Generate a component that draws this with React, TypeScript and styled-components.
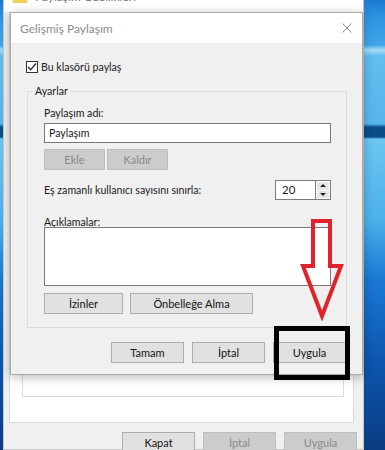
import React from 'react';
import styled, { createGlobalStyle } from 'styled-components';

const GlobalStyle = createGlobalStyle`
  html, body {
    margin: 0;
    padding: 0;
  }
  body {
    width: 385px;
    height: 450px;
    overflow: hidden;
    font-family: Lato, "Noto Sans", sans-serif;
  }
`;

const Desktop = styled.div`
  position: relative;
  width: 385px;
  height: 450px;
  overflow: hidden;
  background: linear-gradient(
    180deg,
    #1a7ad2 0px,
    #2f95e3 18px,
    #3fa6ea 45px,
    #a6ddf7 50px,
    #63bdef 56px,
    #56b5ec 124px,
    #0b4c8a 127px,
    #0b4c8a 137px,
    #6cc6f3 139px,
    #4cb0ea 220px,
    #1a78d4 280px,
    #0c56b0 360px,
    #0a3c80 450px
  );
`;

/* window behind */
const BackWindow = styled.div`
  position: absolute;
  left: 3px;
  top: -20px;
  width: 361px;
  height: 470px;
  box-sizing: border-box;
  border: 1px solid #c8c8c8;
  background: #f0f0f0;
  display: flex;
  flex-direction: column;
`;

const BackTitle = styled.div`
  height: 31px;
  flex-shrink: 0;
  background: #ffffff;
  display: flex;
  align-items: center;
  gap: 8px;
  padding-left: 9px;
  font-size: 12px;
  color: #777777;
`;

const BackBody = styled.div`
  flex: 1;
  display: flex;
  flex-direction: column;
  padding: 0 6px 0 5px;
`;

const TabPage = styled.div`
  height: 411px;
  box-sizing: border-box;
  margin-right: 3px;
  background: #ffffff;
  border: 1px solid #d9d9d9;
  display: flex;
  flex-direction: column;
  justify-content: flex-end;
  padding: 0 9px 25px 12px;
`;

const InnerBox = styled.div`
  height: 100px;
  border: 1px solid #dcdcdc;
`;

const ButtonRow = styled.div<{ $top: number; $right?: number }>`
  display: flex;
  justify-content: flex-end;
  gap: 8px;
  margin-top: ${p => p.$top}px;
  padding-right: ${p => p.$right ?? 0}px;
`;

const Button = styled.button<{ $w: number }>`
  width: ${p => p.$w}px;
  height: 21px;
  padding: 0;
  box-sizing: border-box;
  background: #e1e1e1;
  border: 1px solid #adadad;
  font-family: Lato, "Noto Sans", sans-serif;
  font-size: 11px;
  color: #111111;

  &:disabled {
    background: #cccccc;
    border-color: #bfbfbf;
    color: #8a8a8a;
  }
`;

/* front dialog */
const Dialog = styled.div`
  position: absolute;
  left: 10px;
  top: 12px;
  width: 353px;
  height: 363px;
  box-sizing: border-box;
  border: 1px solid #aaaaaa;
  background: #f0f0f0;
  box-shadow: 0 2px 10px rgba(0, 0, 0, 0.28);
  display: flex;
  flex-direction: column;
`;

const TitleBar = styled.div`
  height: 30px;
  flex-shrink: 0;
  background: #ffffff;
  display: flex;
  align-items: center;
  justify-content: space-between;
  padding: 0 10px 0 9px;
  font-size: 12px;
  color: #8c8c8c;
`;

const DialogBody = styled.div`
  flex: 1;
  display: flex;
  flex-direction: column;
  padding: 18px 15px 0 15px;
  font-size: 10.6px;
  color: #1a1a1a;
`;

const CheckRow = styled.label`
  display: flex;
  align-items: center;
  gap: 3px;
  height: 12px;
  line-height: 14px;
`;

const CheckBox = styled.span`
  width: 12px;
  height: 12px;
  box-sizing: border-box;
  border: 1px solid #333333;
  background: #ffffff;
  display: flex;
  align-items: center;
  justify-content: center;
`;

const GroupBox = styled.div`
  margin: 18px 0 0 1px;
  border: 1px solid #dcdcdc;
  padding: 0 15px 13px 16px;
  display: flex;
  flex-direction: column;
`;

const Legend = styled.span`
  align-self: flex-start;
  margin: -8px 0 0 -11px;
  padding: 0 2px;
  line-height: 14px;
  background: #f0f0f0;
`;

const Label = styled.div<{ $top: number }>`
  margin-top: ${p => p.$top}px;
  line-height: 14px;
`;

const TextField = styled.div<{ $h: number; $top: number }>`
  height: ${p => p.$h}px;
  margin-top: ${p => p.$top}px;
  box-sizing: border-box;
  border: 1px solid #7a7a7a;
  background: #ffffff;
  padding-left: 4px;
  line-height: 18px;
`;

const LimitRow = styled.div`
  display: flex;
  align-items: center;
  justify-content: space-between;
  margin-top: 10px;
  height: 20px;
`;

const Spin = styled.div`
  display: flex;
  height: 20px;
`;

const SpinValue = styled.div`
  width: 40px;
  box-sizing: border-box;
  border: 1px solid #7a7a7a;
  border-right: none;
  background: #ffffff;
  padding-left: 6px;
  line-height: 18px;
  font-size: 11.5px;
`;

const SpinButtons = styled.div`
  width: 16px;
  box-sizing: border-box;
  border: 1px solid #7a7a7a;
  background: #ffffff;
  display: flex;
  flex-direction: column;
  padding: 1px;
  gap: 1px;
`;

const SpinBtn = styled.div<{ $down?: boolean }>`
  flex: 1;
  background: #e5e5e5;
  display: flex;
  align-items: center;
  justify-content: center;

  &::after {
    content: '';
    border-left: 3px solid transparent;
    border-right: 3px solid transparent;
    ${p =>
      p.$down ? 'border-top: 3px solid #222;' : 'border-bottom: 3px solid #222;'}
  }
`;

const Row = styled.div<{ $top: number; $gap: number }>`
  display: flex;
  gap: ${p => p.$gap}px;
  margin-top: ${p => p.$top}px;
`;

/* annotations drawn over the screenshot */
const Highlight = styled.div`
  position: absolute;
  left: 274px;
  top: 326px;
  width: 76px;
  height: 54px;
  box-sizing: border-box;
  border: 5px solid #000000;
`;

const ArrowSvg = styled.svg`
  position: absolute;
  left: 296px;
  top: 215px;
`;

const Folder = () => (
  <svg width="14" height="12" viewBox="0 0 14 12">
    <path d="M0 2h5l1 1.5h8V12H0z" fill="#e8b93c" />
    <path d="M0 4h14v8H0z" fill="#f5cd5a" />
  </svg>
);

const CloseX = () => (
  <svg width="10" height="10" viewBox="0 0 10 10">
    <path d="M0.5 0.5l9 9M9.5 0.5l-9 9" stroke="#8a8a8a" strokeWidth="1" />
  </svg>
);

const App: React.FC = () => {
  return (
    <Desktop>
      <GlobalStyle />
      <BackWindow>
        <BackTitle>
          <Folder />
          Paylaşım Özellikleri
        </BackTitle>
        <BackBody>
          <TabPage>
            <InnerBox />
          </TabPage>
          <ButtonRow $top={9}>
            <Button $w={73}>Kapat</Button>
            <Button $w={73} disabled>İptal</Button>
            <Button $w={73} disabled>Uygula</Button>
          </ButtonRow>
        </BackBody>
      </BackWindow>

      <Dialog>
        <TitleBar>
          Gelişmiş Paylaşım
          <CloseX />
        </TitleBar>
        <DialogBody>
          <CheckRow>
            <CheckBox>
              <svg width="10" height="10" viewBox="0 0 10 10">
                <path d="M1 5l2.6 2.8L9 1.5" stroke="#222" strokeWidth="1.3" fill="none" />
              </svg>
            </CheckBox>
            Bu klasörü paylaş
          </CheckRow>

          <GroupBox>
            <Legend>Ayarlar</Legend>
            <Label $top={8}>Paylaşım adı:</Label>
            <TextField $h={20} $top={3}>Paylaşım</TextField>
            <Row $top={6} $gap={2}>
              <Button $w={61} disabled>Ekle</Button>
              <Button $w={61} disabled>Kaldır</Button>
            </Row>
            <LimitRow>
              Eş zamanlı kullanıcı sayısını sınırla:
              <Spin>
                <SpinValue>20</SpinValue>
                <SpinButtons>
                  <SpinBtn />
                  <SpinBtn $down />
                </SpinButtons>
              </Spin>
            </LimitRow>
            <Label $top={15}>Açıklamalar:</Label>
            <TextField $h={59} $top={-2} />
            <Row $top={7} $gap={7}>
              <Button $w={79}>İzinler</Button>
              <Button $w={123}>Önbelleğe Alma</Button>
            </Row>
          </GroupBox>

          <ButtonRow $top={14} $right={1}>
            <Button $w={73}>Tamam</Button>
            <Button $w={73}>İptal</Button>
            <Button $w={73}>Uygula</Button>
          </ButtonRow>
        </DialogBody>
      </Dialog>

      <Highlight />
      <ArrowSvg width="52" height="106" viewBox="0 0 52 106">
        <polygon
          points="17,6 34,6 34,51 45,51 26,101 7,51 17,51"
          fill="none"
          stroke="#e0232a"
          strokeWidth="4"
        />
      </ArrowSvg>
    </Desktop>
  );
};

export default App;
